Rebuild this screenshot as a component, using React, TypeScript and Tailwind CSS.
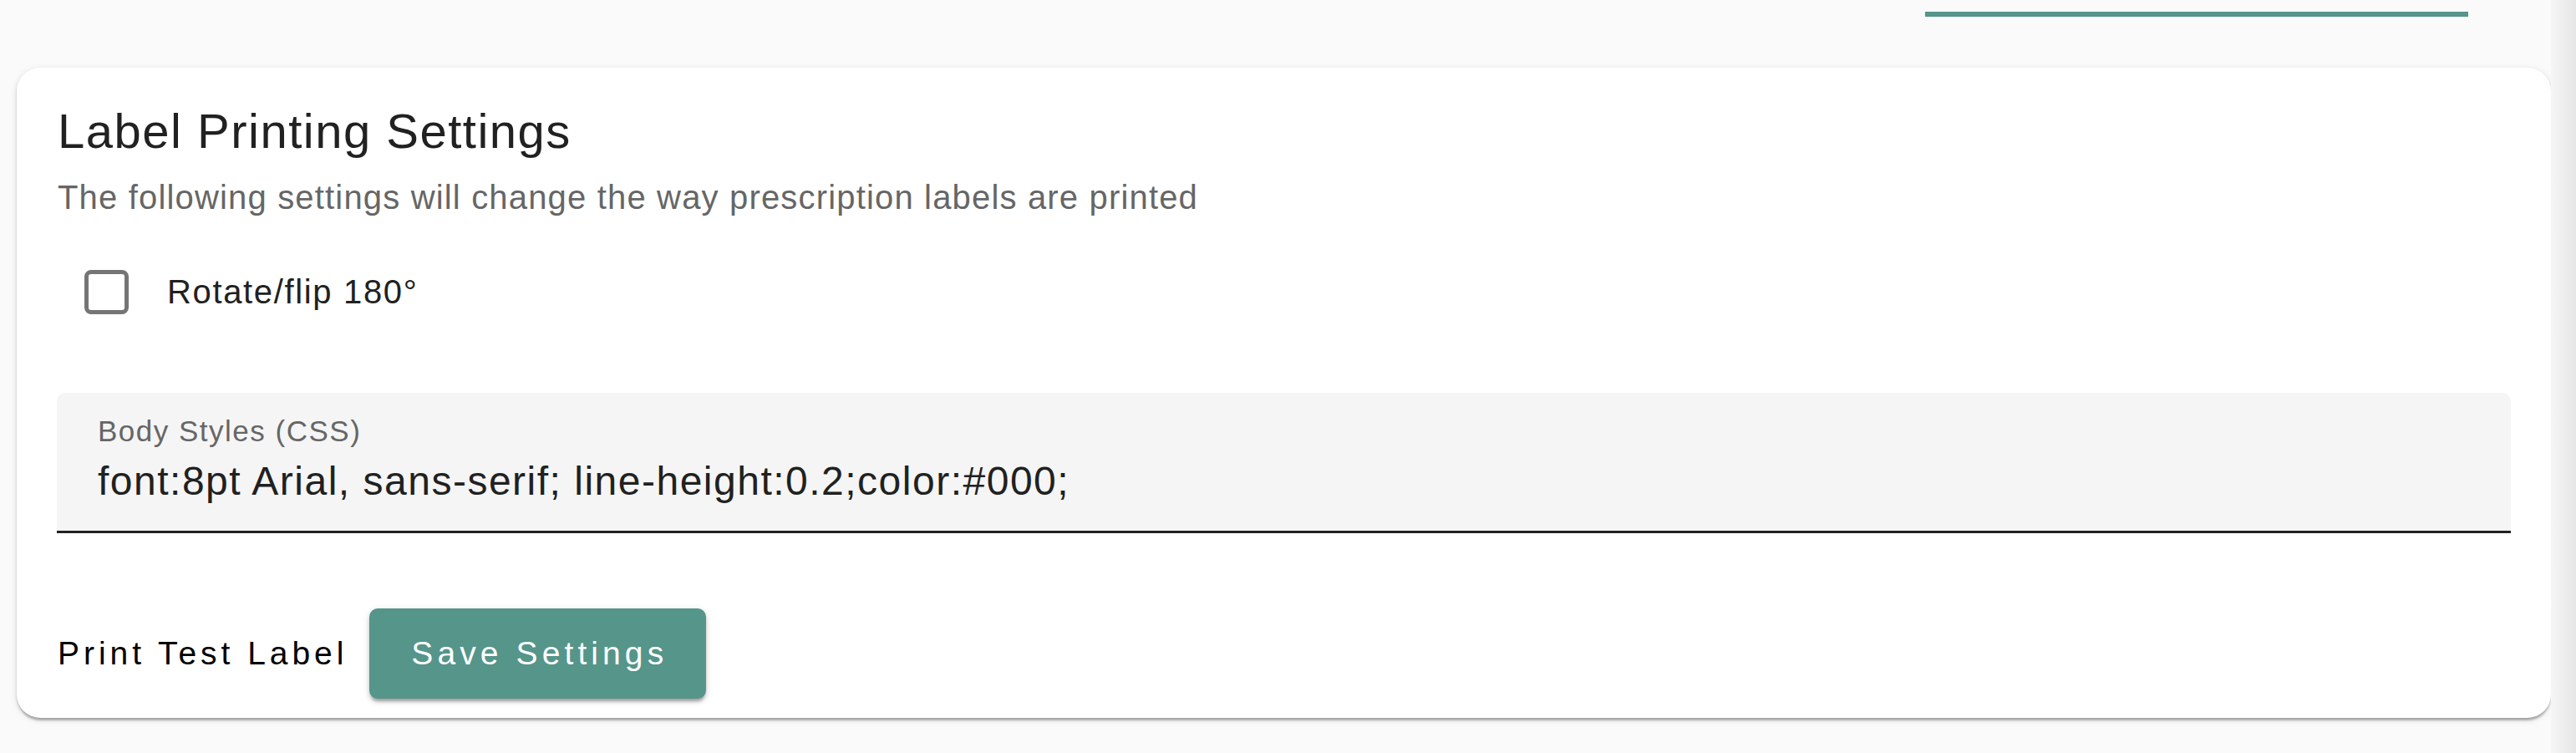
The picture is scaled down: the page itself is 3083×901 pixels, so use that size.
import React from "react";

const FONT = { fontFamily: '"Liberation Sans", Arial, sans-serif' };

// Filled text field, MUI style: grey fill, rounded top, dark underline.
function FilledField({ label, value }: { label: string; value: string }) {
  return (
    <div className="ml-[-1px] rounded-t-[10px] border-b-[3px] border-[#222222] bg-[#f5f5f5] pb-[31px] pl-[49px] pt-[26px]">
      <div className="text-[35px] leading-[40px] tracking-[1.5px] text-[#666666]">{label}</div>
      <div className="mt-[12px] text-[48px] leading-[56px] tracking-[1.5px] text-[#212121]">{value}</div>
    </div>
  );
}

export default function App() {
  return (
    <div className="flex h-[901px] overflow-hidden bg-[#fafafa]" style={FONT}>
      <div className="flex-1 pl-[20px]">
        {/* tab indicator of the bar above (scrolled out of view) */}
        <div className="h-[81px] pl-[2284px] pt-[14px]">
          <div className="h-[6px] w-[650px] bg-[#55958a]" />
        </div>

        <div className="rounded-[28px] bg-white pb-[23px] pl-[49px] pr-[48px] pt-[42px] shadow-[0_5px_3px_-2px_rgba(0,0,0,0.2),0_2px_3px_0_rgba(0,0,0,0.14),0_2px_8px_0_rgba(0,0,0,0.12)]">
          <h2 className="text-[58px] leading-[68px] tracking-[1.5px] text-[#212121]">
            Label Printing Settings
          </h2>
          <p className="mt-[21px] text-[40px] leading-[48px] tracking-[1.17px] text-[#666666]">
            The following settings will change the way prescription labels are printed
          </p>

          <label className="mt-[63px] flex items-center">
            <span className="ml-[32px] size-[53px] rounded-[8px] border-[5px] border-[#757575]" />
            <span className="ml-[46px] text-[40px] leading-[53px] tracking-[1.65px] text-[#212121]">
              Rotate/flip 180°
            </span>
          </label>

          <div className="mt-[94px]">
            <FilledField label="Body Styles (CSS)" value="font:8pt Arial, sans-serif; line-height:0.2;color:#000;" />
          </div>

          <div className="mt-[90px] flex items-center">
            <button type="button" className="text-[39px] leading-[46px] tracking-[4.95px] text-black">
              Print Test Label
            </button>
            <button
              type="button"
              className="ml-[26px] rounded-[10px] bg-[#55958a] pl-[50px] pr-[46px] py-[31px] text-[39px] leading-[46px] tracking-[5.1px] text-white shadow-[0_5px_3px_-2px_rgba(0,0,0,0.2),0_4px_5px_0_rgba(0,0,0,0.14),0_2px_10px_0_rgba(0,0,0,0.12)]"
            >
              Save Settings
            </button>
          </div>
        </div>
      </div>
      <div className="w-[30px] bg-gradient-to-r from-[#f6f6f6] to-[#e6e6e6]" />
    </div>
  );
}
